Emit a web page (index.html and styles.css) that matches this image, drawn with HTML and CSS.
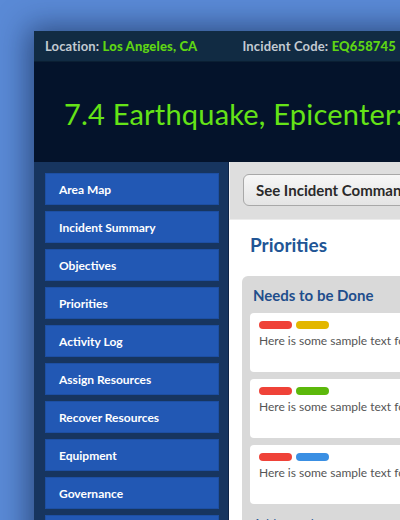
FILE: index.html
```html
<!DOCTYPE html>
<html>
<head>
<meta charset="utf-8">
<link rel="stylesheet" href="styles.css">
</head>
<body>
<div class="app">
  <div class="topbar">
    <span class="meta">Location: <b>Los Angeles, CA</b></span>
    <span class="meta">Incident Code: <b>EQ658745</b></span>
  </div>
  <div class="header">
    <h1>7.4 Earthquake, Epicenter: Downtown</h1>
  </div>
  <div class="main">
    <nav class="sidebar">
      <a class="nav-item">Area Map</a>
      <a class="nav-item">Incident Summary</a>
      <a class="nav-item">Objectives</a>
      <a class="nav-item">Priorities</a>
      <a class="nav-item">Activity Log</a>
      <a class="nav-item">Assign Resources</a>
      <a class="nav-item">Recover Resources</a>
      <a class="nav-item">Equipment</a>
      <a class="nav-item">Governance</a>
      <a class="nav-item">Reports</a>
    </nav>
    <section class="content">
      <div class="toolbar">
        <button class="btn">See Incident Command Chart</button>
      </div>
      <div class="body">
        <h2>Priorities</h2>
        <div class="column">
          <h3>Needs to be Done</h3>
          <div class="card">
            <div class="tags"><span class="tag red"></span><span class="tag yellow"></span></div>
            <p>Here is some sample text for this card</p>
          </div>
          <div class="card">
            <div class="tags"><span class="tag red"></span><span class="tag green"></span></div>
            <p>Here is some sample text for this card</p>
          </div>
          <div class="card">
            <div class="tags"><span class="tag red"></span><span class="tag blue"></span></div>
            <p>Here is some sample text for this card</p>
          </div>
          <div class="add">Add a card...</div>
        </div>
      </div>
    </section>
  </div>
</div>
</body>
</html>
```
FILE: styles.css
```css
html, body {
  margin: 0;
  padding: 0;
}
body {
  width: 400px;
  height: 520px;
  overflow: hidden;
  background: #5a8ad6;
  font-family: Lato, "Open Sans", sans-serif;
}
.app {
  margin: 31px 0 0 34px;
  width: 620px;
  height: 600px;
  box-shadow: -6px -4px 28px rgba(10, 25, 60, 0.55);
  display: flex;
  flex-direction: column;
}
.topbar {
  height: 31px;
  background: #112b43;
  display: flex;
  align-items: center;
  padding-left: 11px;
  gap: 45px;
  border-bottom: 1px solid #0b1f33;
  box-sizing: border-box;
}
.meta {
  color: #c3cad2;
  font-size: 13px;
  font-weight: 700;
  letter-spacing: 0.15px;
}
.meta b {
  color: #5fd613;
}
.header {
  height: 100px;
  background: #04132b;
  display: flex;
  align-items: center;
  padding-left: 30px;
  padding-top: 2px;
  box-sizing: border-box;
}
.header h1 {
  margin: 0;
  color: #65e317;
  font-size: 29px;
  font-weight: 400;
  white-space: nowrap;
  letter-spacing: 0.2px;
}
.main {
  flex: 1;
  display: grid;
  grid-template-columns: 195px 1fr;
}
.sidebar {
  background: #17355f;
  border-right: 1px solid #0e2446;
  padding: 11px 9px 0 11px;
  display: flex;
  flex-direction: column;
  gap: 6px;
}
.nav-item {
  height: 32px;
  flex: none;
  box-sizing: border-box;
  background: #2258b4;
  border: 1px solid #1d4fa3;
  color: #fff;
  font-size: 12px;
  font-weight: 700;
  display: flex;
  align-items: center;
  padding-left: 13px;
}
.content {
  background: #fff;
}
.toolbar {
  height: 58px;
  background: #dedede;
  border-bottom: 1px solid #ececec;
  border-left: 1px solid #f2f2f2;
  padding: 12px 0 0 13px;
  box-sizing: border-box;
}
.btn {
  height: 32px;
  padding: 0 12px;
  border: 1px solid #a8a8a8;
  border-radius: 6px;
  background: linear-gradient(#f7f7f7, #e4e4e4);
  font-family: Lato, "Open Sans", sans-serif;
  font-size: 15px;
  font-weight: 700;
  color: #2a2a2a;
  white-space: nowrap;
}
.body {
  padding: 13px 0 0 13px;
}
.body h2 {
  margin: 0 0 0 8px;
  height: 30px;
  line-height: 24px;
  color: #215595;
  font-size: 19px;
  font-weight: 700;
}
.column {
  margin-top: 13px;
  background: #d9d9d9;
  border-radius: 6px 0 0 0;
  padding: 10px 0 0 8px;
  display: flex;
  flex-direction: column;
  gap: 7px;
}
.column h3 {
  margin: 0 0 1px 3px;
  color: #1f4e8c;
  font-size: 15px;
  font-weight: 700;
  line-height: 19px;
}
.card {
  background: #fff;
  border-radius: 4px 0 0 4px;
  height: 59px;
  flex: none;
  box-sizing: border-box;
  padding: 8px 9px;
}
.tags {
  display: flex;
  gap: 4px;
}
.tag {
  width: 33px;
  height: 8px;
  border-radius: 4px;
}
.red { background: #ef4238; }
.yellow { background: #e3b700; }
.green { background: #5cb80b; }
.blue { background: #3a8fe3; }
.card p {
  margin: 4px 0 0;
  font-size: 12px;
  color: #555;
  white-space: nowrap;
}
.add {
  padding: 5px 0 0 3px;
  color: #2a5a9a;
  font-size: 13px;
}
```
